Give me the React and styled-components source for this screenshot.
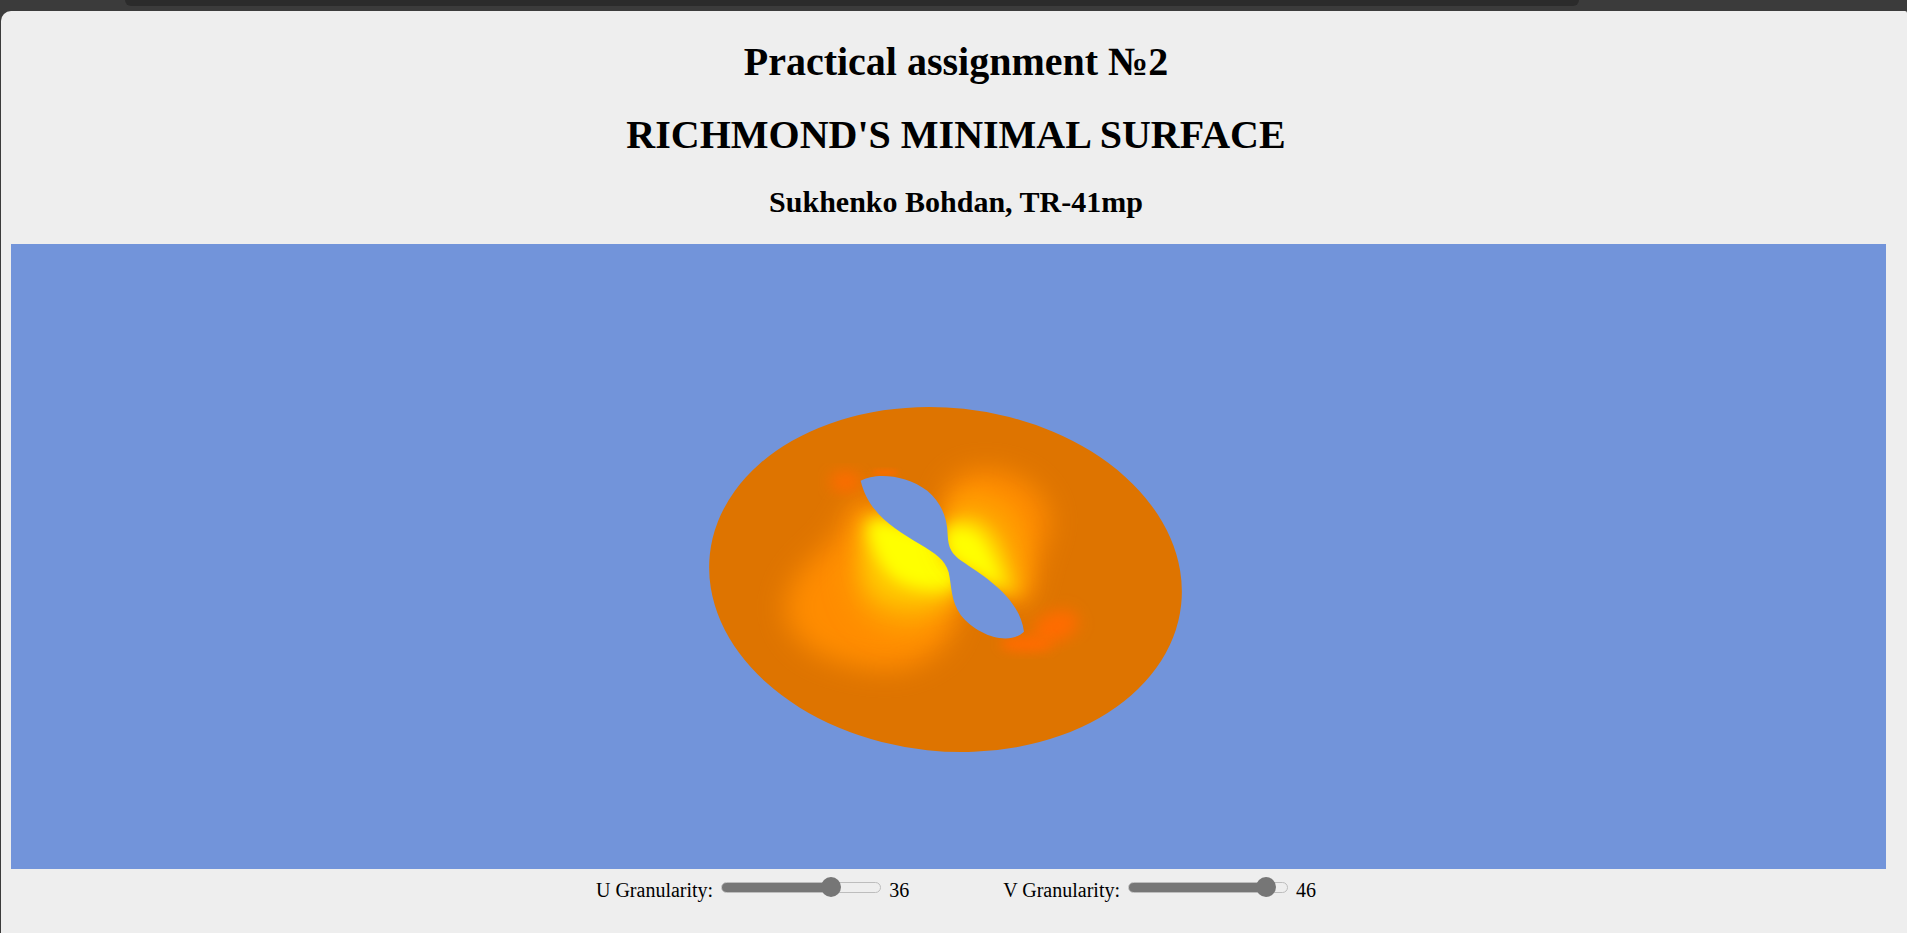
import React from "react";
import styled, { createGlobalStyle } from "styled-components";

const Global = createGlobalStyle`
  html, body { margin: 0; padding: 0; height: 100%; overflow: hidden; background: #3a3a3a; }
  #root { height: 100%; }
`;

const Screen = styled.div`
  height: 933px;
  display: flex;
  flex-direction: column;
  background: #3b3b3b;
`;
const TopBar = styled.div`
  height: 11px;
  flex: none;
  padding: 0 328px 0 125px;
`;
const TopPill = styled.div`
  height: 6px;
  background: #2b2b2b;
  border-radius: 0 0 12px 12px;
`;
const Panel = styled.main`
  flex: 1;
  margin-left: 1px;
  padding: 0 6px 0 10px;
  background: #eeeeee;
  border-radius: 10px 2px 0 0;
  font-family: "Liberation Serif", "Times New Roman", serif;
  color: #000;
  text-align: center;
`;
const Title = styled.h1`
  margin: 0;
  padding-top: 28px;
  font-size: 40px;
  line-height: 46px;
  font-weight: 700;
`;
const Subtitle = styled.h2`
  margin: 0;
  padding-top: 27px;
  font-size: 40px;
  line-height: 46px;
  font-weight: 700;
`;
const Author = styled.h3`
  margin: 0;
  padding-top: 27px;
  font-size: 30px;
  line-height: 34px;
  font-weight: 700;
`;
const Canvas = styled.svg`
  display: block;
  width: 1875px;
  height: 625px;
  margin-top: 25px;
  background: #7294da;
`;
const Controls = styled.div`
  display: flex;
  justify-content: center;
  gap: 94px;
  padding-top: 10px;
  font-size: 20px;
  line-height: 23px;
`;
const Control = styled.label`
  display: flex;
  align-items: flex-start;
  gap: 8px;
`;
const Slider = styled.input`
  -webkit-appearance: none;
  appearance: none;
  width: 160px;
  height: 20px;
  margin: -2px 0 0;
  background: transparent;
  &::-webkit-slider-runnable-track {
    height: 11px;
    border: 1px solid #bdbdbd;
    box-sizing: border-box;
    border-radius: 6px;
    background: linear-gradient(to right, #767676 var(--fill), #ffffff00 var(--fill));
  }
  &::-webkit-slider-thumb {
    -webkit-appearance: none;
    width: 20px;
    height: 20px;
    margin-top: -5.5px;
    border-radius: 50%;
    background: #767676;
    border: 0;
  }
`;

function closed(points) {
  const n = points.length;
  const wrapped = [points[n - 1], ...points, points[0], points[1]];
  let d = `M${points[0][0]} ${points[0][1]}`;
  for (let i = 1; i < wrapped.length - 2; i++) {
    const p0 = wrapped[i - 1], p1 = wrapped[i], p2 = wrapped[i + 1], p3 = wrapped[i + 2];
    d += `C${p1[0] + (p2[0] - p0[0]) / 6} ${p1[1] + (p2[1] - p0[1]) / 6} ${p2[0] - (p3[0] - p1[0]) / 6} ${p2[1] - (p3[1] - p1[1]) / 6} ${p2[0]} ${p2[1]}`;
  }
  return d + "Z";
}

const holePath =
  "M122 92C165 68 255 72 322 122C365 158 382 205 383 255C385 295 395 312 425 333C490 378 598 440 612 545C565 590 470 555 422 495C392 452 396 412 386 367C376 330 345 310 300 283C225 238 145 190 122 92Z";

const glows = [
  { pts: [[530, 320], [450, 440], [340, 560], [310, 680], [400, 790], [600, 840], [740, 790], [800, 680], [780, 520], [620, 400]], fill: "#ff8c00", blur: "b40" },
  { pts: [[560, 380], [520, 480], [500, 590], [560, 690], [680, 720], [780, 650], [790, 520]], fill: "#ffa500", blur: "b40" },
  { pts: [[570, 380], [530, 480], [560, 610], [680, 650], [795, 610], [790, 510]], fill: "#ffc800", blur: "b30" },
  { pts: [[570, 390], [560, 470], [620, 565], [720, 600], [805, 575], [785, 470]], fill: "#ffff00", blur: "b22" },
  { pts: [[770, 330], [810, 260], [900, 240], [1010, 280], [1070, 380], [1040, 500], [990, 650], [900, 570], [790, 490]], fill: "#ff8c00", blur: "b40" },
  { pts: [[780, 350], [860, 310], [965, 365], [1005, 480], [995, 620], [880, 560], [790, 490]], fill: "#ffa000", blur: "b30" },
  { pts: [[780, 400], [860, 380], [935, 450], [975, 610], [880, 560], [790, 500]], fill: "#ffc800", blur: "b22" },
  { pts: [[775, 420], [855, 420], [905, 490], [935, 590], [860, 550], [785, 500]], fill: "#ffff00", blur: "b22" },
];

function Surface() {
  return (
    <Canvas viewBox="11 244 1875 625" aria-label="Richmond's minimal surface">
      <defs>
        {[8, 16, 22, 30, 40].map((s) => (
          <filter key={s} id={`b${s}`} x="-40%" y="-40%" width="180%" height="180%">
            <feGaussianBlur stdDeviation={s} />
          </filter>
        ))}
      </defs>
      <ellipse cx="945.5" cy="579.5" rx="237" ry="171.6" transform="rotate(6.1 945.5 579.5)" fill="#de7400" />
      <g transform="translate(680 390) scale(0.3444 0.3333)">
        {glows.map((g, i) => (
          <path key={i} d={closed(g.pts)} fill={g.fill} filter={`url(#${g.blur})`} />
        ))}
        <ellipse cx="1090" cy="710" rx="70" ry="44" transform="rotate(-25 1090 710)" fill="#ff6c00" filter="url(#b22)" />
        <ellipse cx="1005" cy="762" rx="76" ry="24" fill="#ff6c00" filter="url(#b16)" />
        <ellipse cx="480" cy="275" rx="44" ry="30" fill="#ff6c00" filter="url(#b22)" />
        <ellipse cx="595" cy="248" rx="40" ry="8" fill="#ff6c00" filter="url(#b8)" />
      </g>
      <path d={holePath} transform="translate(820 450) scale(0.3333)" fill="#7294da" />
    </Canvas>
  );
}

function Granularity({ name, value }) {
  const ratio = (value - 1) / 49;
  return (
    <Control>
      {name} Granularity:
      <Slider
        type="range"
        min="1"
        max="50"
        defaultValue={value}
        style={{ "--fill": `${10 + ratio * 140}px` }}
      />
      {value}
    </Control>
  );
}

export default function App() {
  return (
    <Screen>
      <Global />
      <TopBar><TopPill /></TopBar>
      <Panel>
        <Title>Practical assignment №2</Title>
        <Subtitle>RICHMOND'S MINIMAL SURFACE</Subtitle>
        <Author>Sukhenko Bohdan, TR-41mp</Author>
        <Surface />
        <Controls>
          <Granularity name="U" value={36} />
          <Granularity name="V" value={46} />
        </Controls>
      </Panel>
    </Screen>
  );
}
